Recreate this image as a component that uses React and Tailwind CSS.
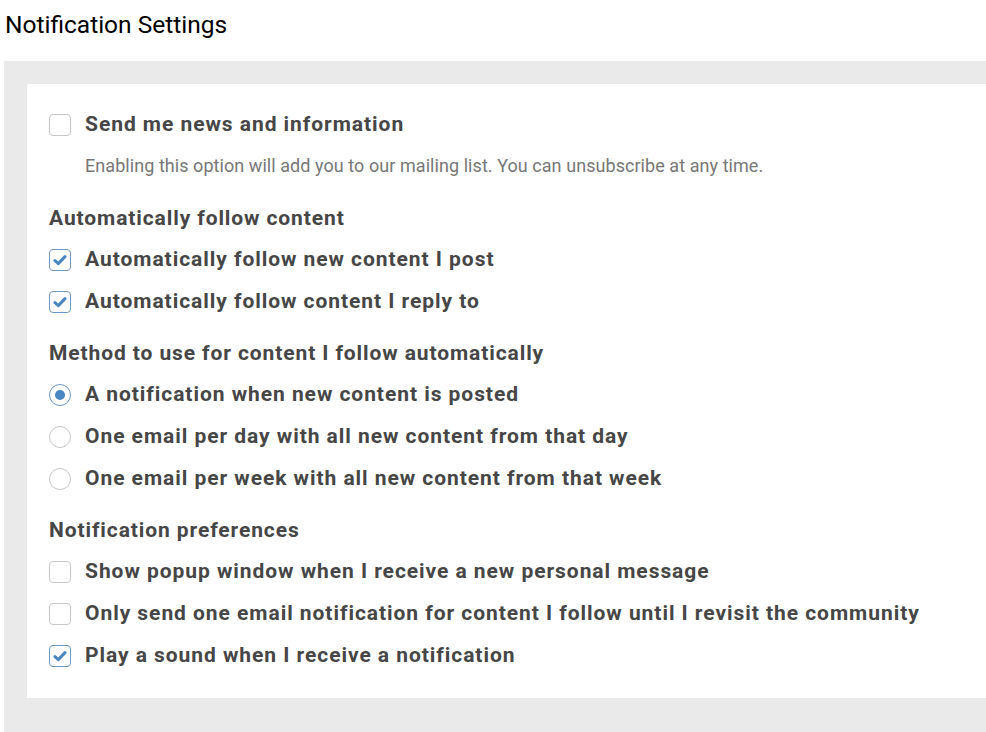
import React from "react";

function Check({ checked }) {
  return (
    <span
      className={
        "flex h-[22px] w-[22px] shrink-0 items-center justify-center rounded-[4px] border bg-white " +
        (checked ? "border-[#6d98c2]" : "border-[#c8c8c8]")
      }
    >
      {checked && (
        <svg width="14" height="12" viewBox="0 0 14 12">
          <path d="M2 6.6 L5.3 9.6 L12 2.6" fill="none" stroke="#4a86c0" strokeWidth="3" strokeLinecap="round" strokeLinejoin="round" />
        </svg>
      )}
    </span>
  );
}

function Radio({ checked }) {
  return (
    <span
      className={
        "flex h-[22px] w-[22px] shrink-0 items-center justify-center rounded-full border bg-white " +
        (checked ? "border-[#6d98c2]" : "border-[#c8c8c8]")
      }
    >
      {checked && <span className="h-[10px] w-[10px] rounded-full bg-[#4a86c0]" />}
    </span>
  );
}

function Row({ children, control }) {
  return (
    <div className="flex h-[42px] items-center gap-[14px]">
      {control}
      <span className="text-[21px] font-bold tracking-[0.95px] text-[#464646]">{children}</span>
    </div>
  );
}

function Heading({ children, mt }) {
  return (
    <div className={"flex h-[40px] items-center text-[21px] font-bold tracking-[0.9px] text-[#464646] " + mt}>
      {children}
    </div>
  );
}

export default function App() {
  return (
    <div className="min-h-[732px] bg-white" style={{ fontFamily: "Roboto, 'Liberation Sans', sans-serif" }}>
      <div className="flex h-[61px] items-start pl-[5px] pt-[9px] text-[24.5px] leading-[32px] text-black">
        Notification Settings
      </div>
      <div className="ml-[4px] bg-[#eaeaea] pl-[23px] pt-[23px] pb-[40px]">
        <div className="bg-white pl-[22px] pt-[20px] pb-[21px]">
          <Row control={<Check checked={false} />}>Send me news and information</Row>
          <div className="flex h-[40px] items-center pb-[2px] pl-[36px] text-[18px] tracking-[0.06px] text-[#777777]">
            Enabling this option will add you to our mailing list. You can unsubscribe at any time.
          </div>
          <Heading mt="mt-[13px]">Automatically follow content</Heading>
          <Row control={<Check checked />}>Automatically follow new content I post</Row>
          <Row control={<Check checked />}>Automatically follow content I reply to</Row>
          <Heading mt="mt-[11px]">Method to use for content I follow automatically</Heading>
          <Row control={<Radio checked />}>A notification when new content is posted</Row>
          <Row control={<Radio checked={false} />}>One email per day with all new content from that day</Row>
          <Row control={<Radio checked={false} />}>One email per week with all new content from that week</Row>
          <Heading mt="mt-[11px]">Notification preferences</Heading>
          <Row control={<Check checked={false} />}>Show popup window when I receive a new personal message</Row>
          <Row control={<Check checked={false} />}>Only send one email notification for content I follow until I revisit the community</Row>
          <Row control={<Check checked />}>Play a sound when I receive a notification</Row>
        </div>
      </div>
    </div>
  );
}
